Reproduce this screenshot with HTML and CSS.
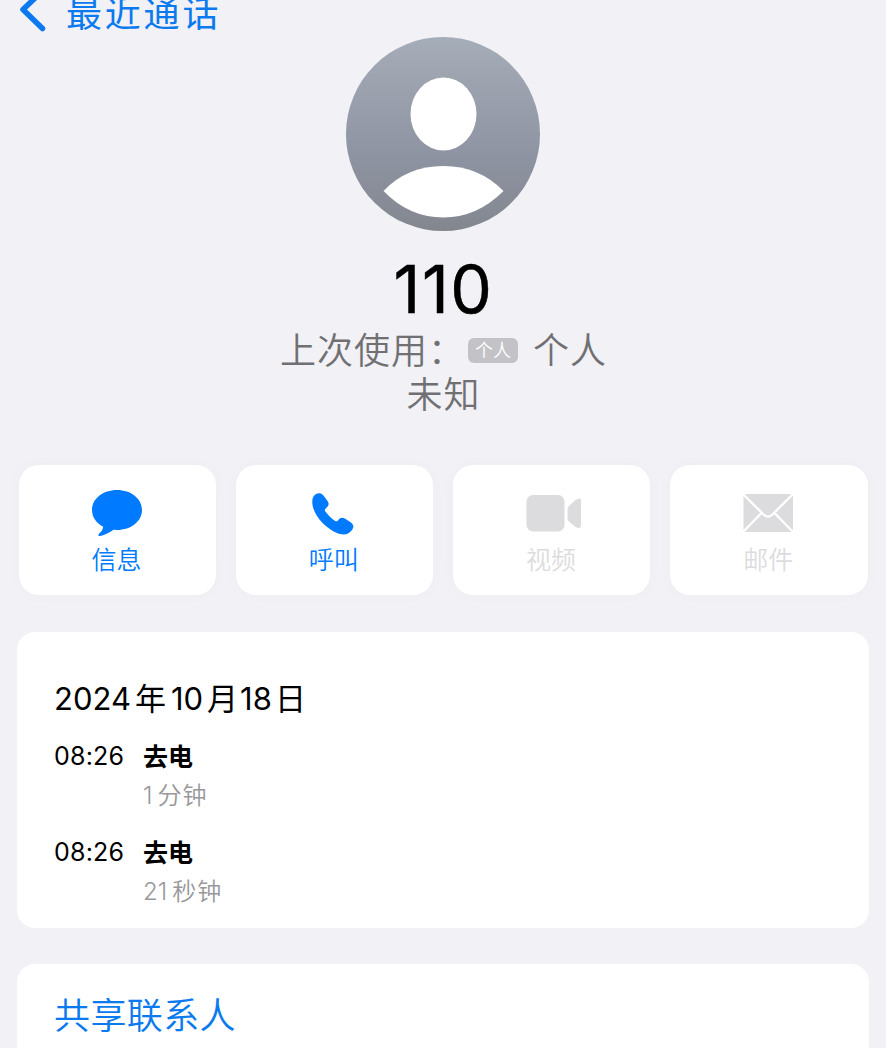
FILE: index.html
```html
<!DOCTYPE html>
<html lang="zh-CN">
<head>
  <meta charset="UTF-8">
  <meta name="viewport" content="width=device-width, initial-scale=1.0">
  <title>通话详情</title>
  <link rel="stylesheet" href="styles.css">
</head>
<body>
  <nav class="nav">
    <svg class="back-icon" width="32" height="37" viewBox="0 0 32 37">
      <path d="M27.500 -9 L8 9.500 L27.500 28.500" fill="none" stroke="currentColor" stroke-width="5.500" stroke-linecap="round" stroke-linejoin="round"/>
    </svg>
    <span class="back-label">最近通话</span>
  </nav>

  <header class="profile">
    <svg class="avatar" width="194" height="194" viewBox="0 0 194 194">
      <defs>
        <linearGradient id="avatarFill" x1="0" y1="0" x2="0" y2="1">
          <stop offset="0" stop-color="#a5adb8"/>
          <stop offset="0.65" stop-color="#8d92a0"/>
          <stop offset="1" stop-color="#82878f"/>
        </linearGradient>
      </defs>
      <circle cx="97" cy="97" r="97" fill="url(#avatarFill)"/>
      <ellipse cx="97.500" cy="77" rx="33" ry="36.500" fill="#fff"/>
      <path d="M37.500 154 Q61 129 97.500 129 Q133 129 157.500 154 Q131 180.500 97.500 180.500 Q63 180.500 37.500 154 Z" fill="#fff"/>
    </svg>
    <h1 class="number">110</h1>
    <p class="line-info">上次使用：<span class="badge">个人</span><span>个人</span></p>
    <p class="line-info">未知</p>
  </header>

  <section class="actions">
    <button class="action">
      <svg width="56" height="50" viewBox="0 0 56 50">
        <path d="M28 2 C42 2 53 10.700 53 22 C53 33.300 42 42 28 42 L24.500 41.800 C20 45 15 47.500 11 48 C9 48 9 46.500 10.200 45.600 C12.500 43.600 13.800 41.500 14.200 38.700 C7.200 35 3 29.100 3 22 C3 10.700 14 2 28 2 Z" fill="currentColor"/>
      </svg>
      <span>信息</span>
    </button>
    <button class="action">
      <svg width="56" height="50" viewBox="0 0 56 50">
        <path d="M6.300 13 C6.500 8 9.800 5 13.300 5.200 C15.500 5.300 17 6.700 18.200 8.600 L21.700 13.200 C23.100 15.400 22.900 17.200 21.200 19 L19.300 20.900 C18.700 21.600 18.700 22.300 19.200 23.200 C21.500 26.500 25.500 30.500 29.200 32.900 C30.200 33.500 31 33.400 31.700 32.700 L33.200 31.100 C34.900 29.400 36.800 29.200 38.900 30.600 L44.200 34 C47.900 36.500 48.200 39.100 45.800 42.200 C42.300 46.700 37.300 47.600 31 45 C18.800 40 5.800 26 6.300 13 Z" fill="currentColor"/>
      </svg>
      <span>呼叫</span>
    </button>
    <button class="action" disabled>
      <svg width="56" height="50" viewBox="0 0 56 50">
        <rect x="3.500" y="7" width="38" height="36.500" rx="6.500" fill="currentColor"/>
        <path d="M44.500 21.500 Q44.500 19.500 46 18 L52 12.500 Q58 8.500 58 13 V37.500 Q58 41.500 52.500 39 L46 33.500 Q44.500 32 44.500 30 Z" fill="currentColor"/>
      </svg>
      <span>视频</span>
    </button>
    <button class="action" disabled>
      <svg width="56" height="50" viewBox="0 0 56 50">
        <rect x="3.500" y="6" width="49.500" height="38" rx="3" fill="currentColor"/>
        <path d="M3 6 L23.500 26.500 Q28 31 32.500 26.500 L53 6 M3 44 L21 25.500 M53 44 L35 25.500" fill="none" stroke="#fff" stroke-width="2.400"/>
      </svg>
      <span>邮件</span>
    </button>
  </section>

  <section class="card history">
    <h2 class="date">2024<span class="year">年</span>10<span class="month">月</span>18<span class="day">日</span></h2>
    <div class="call">
      <span class="time">08:26</span>
      <div>
        <div class="type">去电</div>
        <div class="duration">1<span>分钟</span></div>
      </div>
    </div>
    <div class="call">
      <span class="time">08:26</span>
      <div>
        <div class="type">去电</div>
        <div class="duration">21<span>秒钟</span></div>
      </div>
    </div>
  </section>

  <section class="card share">
    <a class="share-link">共享联系人</a>
  </section>
</body>
</html>
```
FILE: styles.css
```css
/* Global Styles */
* {
  box-sizing: border-box;
}
body {
  margin: 0;
  height: 1048px;
  overflow: hidden;
  background: #f1f1f6;
  font-family: Inter, "Noto Sans CJK SC", sans-serif;
  color: #000;
}
h1, h2, p {
  margin: 0;
  font-weight: 400;
}
/* Navigation */
.nav {
  display: flex;
  height: 37px;
  padding-left: 15px;
  color: #0a7aee;
}
.back-label {
  margin-left: 19px;
  font-size: 36px;
  line-height: 28px;
  letter-spacing: 2.8px;
}
/* Profile */
.profile {
  display: flex;
  flex-direction: column;
  align-items: center;
  height: 428px;
}
.avatar {
  display: block;
}
.number {
  height: 98px;
  padding-left: 1px;
  font-size: 66px;
  line-height: 116px;
  letter-spacing: 1.5px;
  -webkit-text-stroke: 0.5px #000;
}
.line-info {
  display: flex;
  align-items: center;
  height: 44px;
  padding-left: 1px;
  color: #707073;
  font-size: 36px;
  font-weight: 350;
  line-height: 46px;
  letter-spacing: 1px;
}
.badge {
  width: 50px;
  height: 25px;
  margin: 0 15px 2px 3px;
  border-radius: 6px;
  background: #c3c3c7;
  color: #fff;
  font-size: 18px;
  line-height: 25px;
  letter-spacing: 0;
  text-align: center;
}
/* Action Buttons */
.actions {
  display: grid;
  grid-template-columns: repeat(4, 1fr);
  gap: 20px;
  padding: 0 18.5px;
}
.action {
  display: flex;
  flex-direction: column;
  align-items: center;
  height: 130px;
  padding: 23px 1px 0 0;
  border: none;
  border-radius: 20px;
  background: #fff;
  box-shadow: 0 0 16px rgba(0, 0, 0, 0.025);
  color: #007aff;
  font-family: inherit;
  font-size: 25px;
  font-weight: 350;
  line-height: 44px;
}
.action svg {
  overflow: visible;
}
.action:disabled {
  color: #dcdcde;
}
/* Cards */
.card {
  margin: 0 17px;
  border-radius: 18px;
  background: #fff;
}
.history {
  height: 296px;
  margin-top: 37px;
  padding: 44px 37px 0;
}
.date {
  height: 60px;
  font-size: 31px;
  line-height: 46px;
}
.year {
  margin: 0 5px 0 4px;
}
.month {
  margin: 0 2px 0 4px;
}
.day {
  margin-left: 3px;
}
.call {
  display: flex;
  height: 96px;
}
.time {
  width: 89px;
  font-size: 25px;
  line-height: 40px;
  letter-spacing: 0.2px;
}
.type {
  font-size: 25px;
  font-weight: 700;
  line-height: 42px;
}
.duration {
  color: #98989b;
  font-size: 24px;
  font-weight: 350;
  line-height: 36px;
}
.duration span {
  margin-left: 5px;
  letter-spacing: 1px;
}
.share {
  height: 120px;
  margin-top: 36px;
  padding: 26px 37px;
}
.share-link {
  color: #0a7aee;
  font-size: 36px;
  font-weight: 350;
  line-height: 53px;
  letter-spacing: 0.4px;
}
```
